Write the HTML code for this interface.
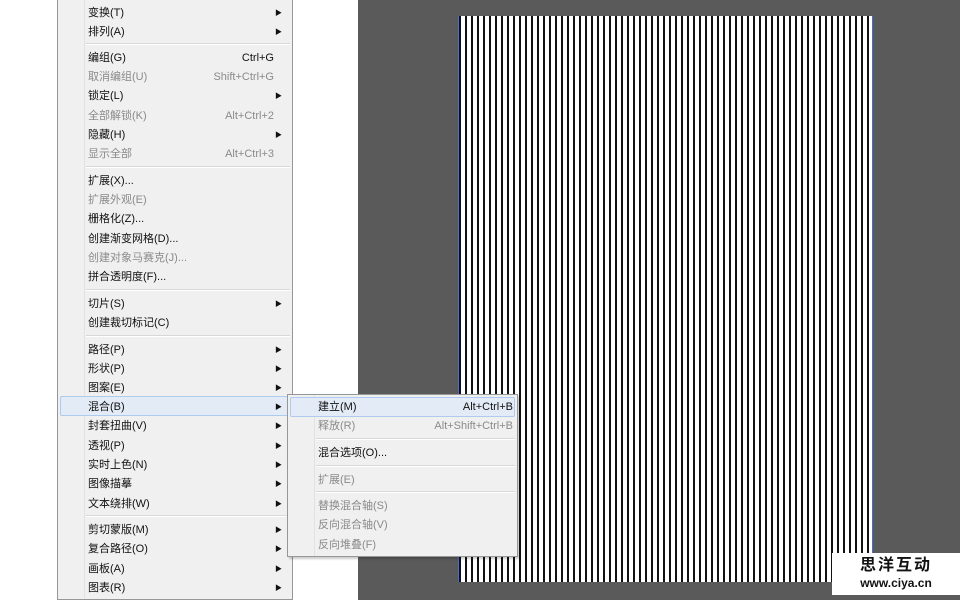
<!DOCTYPE html>
<html><head><meta charset="utf-8"><style>
*{margin:0;padding:0;box-sizing:border-box}
body{width:960px;height:600px;position:relative;overflow:hidden;background:#fff;font-family:"Liberation Sans","Noto Sans CJK SC",sans-serif;font-size:11px;color:#111}
.gray{position:absolute;left:358px;top:0;width:602px;height:600px;background:#5a5a5a}
.art{position:absolute;left:458px;top:16px;width:415px;height:566px;background:repeating-linear-gradient(90deg,#111 0,#111 2px,#fff 2px,#fff 6px);border-left:1px solid #4a6ad0;border-right:1px solid #4a6ad0}
.menu{position:absolute;left:57px;top:0;width:236px;height:600px;background:#f0f0f0;border:1px solid #979797;border-top:none}
.menu:before,.sub:before{content:"";position:absolute;left:26px;top:0;bottom:0;border-left:1px solid #e2e2e2}
.it{position:absolute;left:30px;height:19px;line-height:21px;right:10px}
.it.d{color:#8a8a8a}
.k{position:absolute;right:8px;top:0}
.a{position:absolute;right:0;top:0;font-size:7px}
.sep{position:absolute;left:28px;right:2px;border-top:1px solid #d8d8d8;border-bottom:1px solid #fff}
.hl{position:absolute;left:2px;right:2px;height:20px;background:#e3ecf6;border:1px solid #aecbef;border-radius:2px}
.sub{position:absolute;left:287px;top:394px;width:231px;height:163px;background:#f0f0f0;border:1px solid #979797;box-shadow:2px 2px 2px rgba(0,0,0,.2)}
.sub .it{left:30px;right:8px}
.sub .k{right:-4px}
.logo{position:absolute;left:832px;top:553px;width:128px;height:42px;background:#fff;text-align:center}
</style></head><body>
<div class="gray"></div>
<div class="art"></div>
<div class="menu">
<div class="it" style="top:3px">变换(T)<span class="a">▶</span></div>
<div class="it" style="top:22px">排列(A)<span class="a">▶</span></div>
<div class="sep" style="top:43px"></div>
<div class="it" style="top:48px">编组(G)<span class="k">Ctrl+G</span></div>
<div class="it d" style="top:67px">取消编组(U)<span class="k">Shift+Ctrl+G</span></div>
<div class="it" style="top:86px">锁定(L)<span class="a">▶</span></div>
<div class="it d" style="top:106px">全部解锁(K)<span class="k">Alt+Ctrl+2</span></div>
<div class="it" style="top:125px">隐藏(H)<span class="a">▶</span></div>
<div class="it d" style="top:144px">显示全部<span class="k">Alt+Ctrl+3</span></div>
<div class="sep" style="top:166px"></div>
<div class="it" style="top:171px">扩展(X)...</div>
<div class="it d" style="top:190px">扩展外观(E)</div>
<div class="it" style="top:209px">栅格化(Z)...</div>
<div class="it" style="top:229px">创建渐变网格(D)...</div>
<div class="it d" style="top:248px">创建对象马赛克(J)...</div>
<div class="it" style="top:267px">拼合透明度(F)...</div>
<div class="sep" style="top:289px"></div>
<div class="it" style="top:294px">切片(S)<span class="a">▶</span></div>
<div class="it" style="top:313px">创建裁切标记(C)</div>
<div class="sep" style="top:335px"></div>
<div class="it" style="top:340px">路径(P)<span class="a">▶</span></div>
<div class="it" style="top:359px">形状(P)<span class="a">▶</span></div>
<div class="it" style="top:378px">图案(E)<span class="a">▶</span></div>
<div class="hl" style="top:396px"></div>
<div class="it" style="top:397px">混合(B)<span class="a">▶</span></div>
<div class="it" style="top:416px">封套扭曲(V)<span class="a">▶</span></div>
<div class="it" style="top:436px">透视(P)<span class="a">▶</span></div>
<div class="it" style="top:455px">实时上色(N)<span class="a">▶</span></div>
<div class="it" style="top:474px">图像描摹<span class="a">▶</span></div>
<div class="it" style="top:494px">文本绕排(W)<span class="a">▶</span></div>
<div class="sep" style="top:515px"></div>
<div class="it" style="top:520px">剪切蒙版(M)<span class="a">▶</span></div>
<div class="it" style="top:539px">复合路径(O)<span class="a">▶</span></div>
<div class="it" style="top:559px">画板(A)<span class="a">▶</span></div>
<div class="it" style="top:578px">图表(R)<span class="a">▶</span></div>
</div>
<div class="sub">
<div class="hl" style="top:2px;height:20px"></div>
<div class="it" style="top:2px">建立(M)<span class="k">Alt+Ctrl+B</span></div>
<div class="it d" style="top:21px">释放(R)<span class="k">Alt+Shift+Ctrl+B</span></div>
<div class="sep" style="top:43px"></div>
<div class="it" style="top:48px">混合选项(O)...</div>
<div class="sep" style="top:70px"></div>
<div class="it d" style="top:75px">扩展(E)</div>
<div class="sep" style="top:96px"></div>
<div class="it d" style="top:101px">替换混合轴(S)</div>
<div class="it d" style="top:120px">反向混合轴(V)</div>
<div class="it d" style="top:140px">反向堆叠(F)</div>
</div>
<div class="logo"><div style="font-size:16px;font-weight:bold;line-height:20px;margin-top:3px;letter-spacing:2px">思洋互动</div><div style="font-size:12px;font-weight:bold;line-height:14px">www.ciya.cn</div></div>
</body></html>
